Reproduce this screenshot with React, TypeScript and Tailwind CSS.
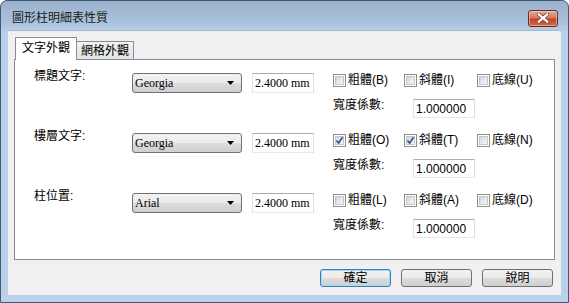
import React from "react";

const sans = "font-['Liberation_Sans','Noto_Sans_CJK_TC',sans-serif]";
const serif = "font-['Liberation_Serif','Noto_Sans_CJK_TC',serif]";

function Check({ checked }: { checked?: boolean }) {
  return (
    <div className="w-[13px] h-[13px] border border-[#8e8f8f] bg-white p-[1px] shrink-0">
      <div className="w-full h-full border border-[#c5c7cb] bg-[linear-gradient(135deg,#d3d5d9_0%,#eceef0_70%,#f8f8f8_100%)] relative">
        {checked && (
          <svg viewBox="0 0 9 9" className="absolute inset-0 w-[9px] h-[9px] -left-px -top-px">
            <path d="M1.5 4.5 L3.6 7 L7.6 1.2" fill="none" stroke="#3a5793" strokeWidth="1.7" />
          </svg>
        )}
      </div>
    </div>
  );
}

function CheckItem({ label, checked, w }: { label: string; checked?: boolean; w: string }) {
  return (
    <div className={`flex items-center mt-[1px] ${w}`}>
      <Check checked={checked} />
      <span className="ml-[2px] text-[12px] leading-[13px]">{label}</span>
    </div>
  );
}

function Combo({ value }: { value: string }) {
  return (
    <div className="w-[110px] h-[20px] rounded-[3px] border border-[#707070] bg-[linear-gradient(to_bottom,#f2f2f2_0%,#ebebeb_50%,#dddddd_50%,#cfcfcf_100%)] flex items-center justify-between pl-[2px] pr-[7px]">
      <span className={`${serif} text-[12px] leading-[14px]`}>{value}</span>
      <svg width="7" height="4" viewBox="0 0 7 4">
        <path d="M0 0 H7 L3.5 4 Z" fill="#000" />
      </svg>
    </div>
  );
}

function TextBox({ value, font, h }: { value: string; font: string; h: string }) {
  return (
    <div
      className={`w-[62px] ${h} bg-white border border-[#abadb3] border-l-[#e2e3ea] border-r-[#dbdfe6] border-b-[#e3e9ef] flex items-center pl-[2px]`}
    >
      <span className={`${font} text-[12px] leading-[14px]`}>{value}</span>
    </div>
  );
}

function Group({
  label,
  font,
  checks,
}: {
  label: string;
  font: string;
  checks: { label: string; checked?: boolean }[];
}) {
  return (
    <div className="flex flex-col">
      <div className="flex items-start">
        <div className="w-[98px] text-[12px] leading-[12px] mt-[-3px]">{label}</div>
        <Combo value={font} />
        <div className="ml-[10px]">
          <TextBox value="2.4000 mm" font={serif} h="h-[20px]" />
        </div>
        <div className="ml-[19px] flex">
          <CheckItem label={checks[0].label} checked={checks[0].checked} w="w-[71px]" />
          <CheckItem label={checks[1].label} checked={checks[1].checked} w="w-[73px]" />
          <CheckItem label={checks[2].label} checked={checks[2].checked} w="w-[70px]" />
        </div>
      </div>
      <div className="flex items-start mt-[6px] ml-[299px]">
        <div className="w-[80px] text-[12px] leading-[12px]">寬度係數:</div>
        <TextBox value="1.000000" font={sans} h="h-[19px]" />
      </div>
    </div>
  );
}

function Button({ label, def }: { label: string; def?: boolean }) {
  return (
    <div
      className={`w-[71px] h-[18px] rounded-[3px] border ${
        def ? "border-[#3c7fb1] shadow-[inset_0_0_0_1px_#9fdcf8]" : "border-[#707070]"
      } bg-[linear-gradient(to_bottom,#f2f2f2_0%,#ebebeb_50%,#dddddd_50%,#cfcfcf_100%)] flex items-center justify-center text-[12px] leading-[14px]`}
    >
      {label}
    </div>
  );
}

export default function App() {
  return (
    <div
      className={`${sans} w-[569px] h-[303px] rounded-t-[7px] border border-[#44576b] bg-[linear-gradient(to_bottom,#9bb2cd_0px,#a9c0da_20px,#b9d1ea_32px,#b9d1ea_100%)] flex flex-col overflow-hidden text-black`}
    >
      <div className="h-[29px] pt-[5px] pl-[11px] pr-[10px] flex items-center justify-between">
        <span className="text-[12px] leading-[14px] text-[#1a1a1a]">圖形柱明細表性質</span>
        <div className="w-[30px] h-[17px] rounded-[3px] border border-[#6b2a20] bg-[linear-gradient(to_bottom,#e5a99b_0%,#d57865_45%,#c0432c_55%,#d06a4a_100%)] flex items-center justify-center shadow-[inset_0_0_0_1px_rgba(255,220,210,0.5)]">
          <svg width="12" height="10" viewBox="0 0 12 10">
            <path d="M1.5 1 L10.5 9 M10.5 1 L1.5 9" stroke="#5a3a36" strokeWidth="3.6" strokeLinecap="square" />
            <path d="M1.8 1.3 L10.2 8.7 M10.2 1.3 L1.8 8.7" stroke="#ffffff" strokeWidth="2.2" strokeLinecap="square" />
          </svg>
        </div>
      </div>
      <div className="mx-[7px] h-[265px] bg-[#f0f0f0] border-t border-[#a3b6cb] flex flex-col">
        <div className="pt-[6px] pl-[7px] h-[28px] flex items-end">
          <div className="relative z-10 h-[23px] mb-[-1px] px-[6px] bg-white border border-b-0 border-[#898c95] flex items-start pt-[3px] text-[12px] leading-[14px]">
            文字外觀
          </div>
          <div className="h-[18px] px-[4px] bg-[linear-gradient(to_bottom,#f2f2f2,#e3e3e3)] border border-l-0 border-b-0 border-[#898c95] flex items-center text-[12px] leading-[14px]">
            網格外觀
          </div>
        </div>
        <div className="ml-[6px] w-[541px] h-[201px] bg-white border border-[#898c95] pl-[19px] pt-[13px] flex flex-col gap-[15px]">
          <Group
            label="標題文字:"
            font="Georgia"
            checks={[{ label: "粗體(B)" }, { label: "斜體(I)" }, { label: "底線(U)" }]}
          />
          <Group
            label="樓層文字:"
            font="Georgia"
            checks={[
              { label: "粗體(O)", checked: true },
              { label: "斜體(T)", checked: true },
              { label: "底線(N)" },
            ]}
          />
          <Group
            label="柱位置:"
            font="Arial"
            checks={[{ label: "粗體(L)" }, { label: "斜體(A)" }, { label: "底線(D)" }]}
          />
        </div>
        <div className="mt-[9px] pr-[8px] flex justify-end gap-[10px]">
          <Button label="確定" def />
          <Button label="取消" />
          <Button label="說明" />
        </div>
      </div>
    </div>
  );
}
